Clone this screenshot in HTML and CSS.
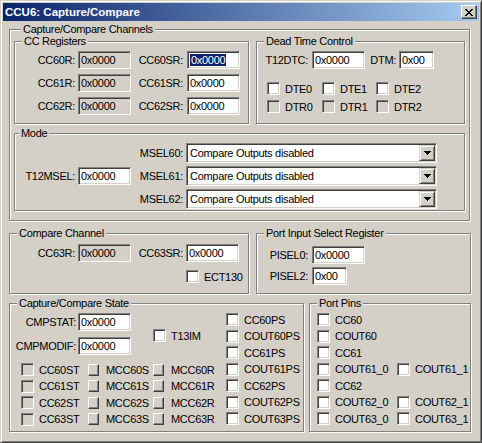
FILE: index.html
```html
<!DOCTYPE html>
<html lang="en">
<head>
    <meta charset="UTF-8">
    <title>CCU6: Capture/Compare</title>
    <link rel="stylesheet" href="styles.css">
</head>
<body>
<div id="window">
    <div id="titlebar">
        <span class="caption">CCU6: Capture/Compare</span>
        <span class="close-btn"><svg width="8" height="7" viewBox="0 0 8 7"><path d="M0 0h2v1H0zM6 0h2v1H6zM1 1h2v1H1zM5 1h2v1H5zM2 2h4v1H2zM3 3h2v1H3zM2 4h4v1H2zM1 5h2v1H1zM5 5h2v1H5zM0 6h2v1H0zM6 6h2v1H6z" fill="#000"/></svg></span>
    </div>
    <div id="client">
        <div class="group channels">
            <div class="legend">Capture/Compare Channels</div>
            <div class="top-row">
                <div class="group cc-regs">
                    <div class="legend">CC Registers</div>
                    <div class="reg-grid">
                        <span class="lbl">CC60R:</span><span class="edit ro">0x0000</span>
                        <span class="lbl lbl2">CC60SR:</span><span class="edit"><span class="sel">0x0000</span></span>
                        <span class="lbl">CC61R:</span><span class="edit ro">0x0000</span>
                        <span class="lbl lbl2">CC61SR:</span><span class="edit">0x0000</span>
                        <span class="lbl">CC62R:</span><span class="edit ro">0x0000</span>
                        <span class="lbl lbl2">CC62SR:</span><span class="edit">0x0000</span>
                    </div>
                </div>
                <div class="group dead-time">
                    <div class="legend">Dead Time Control</div>
                    <div class="dt-row">
                        <span class="lbl lbl2">T12DTC:</span><span class="edit">0x0000</span>
                        <span class="lbl">DTM:</span><span class="edit">0x00</span>
                    </div>
                    <div class="dt-checks">
                        <span class="check"><span class="box"></span>DTE0</span>
                        <span class="check"><span class="box"></span>DTE1</span>
                        <span class="check"><span class="box"></span>DTE2</span>
                        <span class="check"><span class="box dis"></span>DTR0</span>
                        <span class="check"><span class="box dis"></span>DTR1</span>
                        <span class="check"><span class="box dis"></span>DTR2</span>
                    </div>
                </div>
            </div>
            <div class="group mode">
                <div class="legend">Mode</div>
                <div class="mode-body">
                    <div class="mode-left">
                        <span class="lbl">T12MSEL:</span><span class="edit">0x0000</span>
                    </div>
                    <div class="mode-right">
                        <span class="lbl">MSEL60:</span>
                        <span class="combo"><span class="combo-text">Compare Outputs disabled</span><span class="combo-btn"><svg width="7" height="4" viewBox="0 0 7 4"><path d="M0 0h7v1H0zM1 1h5v1H1zM2 2h3v1H2zM3 3h1v1H3z" fill="#000"/></svg></span></span>
                        <span class="lbl">MSEL61:</span>
                        <span class="combo"><span class="combo-text">Compare Outputs disabled</span><span class="combo-btn"><svg width="7" height="4" viewBox="0 0 7 4"><path d="M0 0h7v1H0zM1 1h5v1H1zM2 2h3v1H2zM3 3h1v1H3z" fill="#000"/></svg></span></span>
                        <span class="lbl">MSEL62:</span>
                        <span class="combo"><span class="combo-text">Compare Outputs disabled</span><span class="combo-btn"><svg width="7" height="4" viewBox="0 0 7 4"><path d="M0 0h7v1H0zM1 1h5v1H1zM2 2h3v1H2zM3 3h1v1H3z" fill="#000"/></svg></span></span>
                    </div>
                </div>
            </div>
        </div>

        <div class="mid-row">
            <div class="group compare-ch">
                <div class="legend">Compare Channel</div>
                <div class="cmp-grid">
                    <span class="lbl">CC63R:</span><span class="edit ro">0x0000</span>
                    <span class="lbl">CC63SR:</span><span class="edit">0x0000</span>
                    <span class="check col4"><span class="box"></span>ECT130</span>
                </div>
            </div>
            <div class="group port-input">
                <div class="legend">Port Input Select Register</div>
                <div class="pisel-grid">
                    <span class="lbl lbl2">PISEL0:</span><span class="edit">0x0000</span>
                    <span class="lbl lbl2">PISEL2:</span><span class="edit short">0x00</span>
                </div>
            </div>
        </div>

        <div class="bottom-row">
            <div class="group cc-state">
                <div class="legend">Capture/Compare State</div>
                <div class="state-body">
                    <div class="state-left">
                        <div class="state-top">
                            <span class="lbl">CMPSTAT:</span><span class="edit">0x0000</span>
                            <span class="lbl">CMPMODIF:</span><span class="edit">0x0000</span>
                            <span class="check t13im"><span class="box"></span>T13IM</span>
                        </div>
                        <div class="state-grid">
                            <span class="check"><span class="box dis"></span>CC60ST</span>
                            <span class="check wide"><span class="box raised"></span>MCC60S</span>
                            <span class="check wide"><span class="box raised"></span>MCC60R</span>
                            <span class="check"><span class="box dis"></span>CC61ST</span>
                            <span class="check wide"><span class="box raised"></span>MCC61S</span>
                            <span class="check wide"><span class="box raised"></span>MCC61R</span>
                            <span class="check"><span class="box dis"></span>CC62ST</span>
                            <span class="check wide"><span class="box raised"></span>MCC62S</span>
                            <span class="check wide"><span class="box raised"></span>MCC62R</span>
                            <span class="check"><span class="box dis"></span>CC63ST</span>
                            <span class="check wide"><span class="box raised"></span>MCC63S</span>
                            <span class="check wide"><span class="box raised"></span>MCC63R</span>
                        </div>
                    </div>
                    <div class="state-right">
                        <span class="check"><span class="box"></span>CC60PS</span>
                        <span class="check"><span class="box"></span>COUT60PS</span>
                        <span class="check"><span class="box"></span>CC61PS</span>
                        <span class="check"><span class="box"></span>COUT61PS</span>
                        <span class="check"><span class="box"></span>CC62PS</span>
                        <span class="check"><span class="box"></span>COUT62PS</span>
                        <span class="check"><span class="box"></span>COUT63PS</span>
                    </div>
                </div>
            </div>
            <div class="group port-pins">
                <div class="legend">Port Pins</div>
                <div class="pins-grid">
                    <span class="check full"><span class="box"></span>CC60</span>
                    <span class="check full"><span class="box"></span>COUT60</span>
                    <span class="check full"><span class="box"></span>CC61</span>
                    <span class="check"><span class="box"></span>COUT61_0</span>
                    <span class="check"><span class="box"></span>COUT61_1</span>
                    <span class="check full"><span class="box"></span>CC62</span>
                    <span class="check"><span class="box"></span>COUT62_0</span>
                    <span class="check"><span class="box"></span>COUT62_1</span>
                    <span class="check"><span class="box"></span>COUT63_0</span>
                    <span class="check"><span class="box"></span>COUT63_1</span>
                </div>
            </div>
        </div>
    </div>
</div>
</body>
</html>
```

FILE: styles.css
```css
body {
    margin: 0;
}
#window {
    width: 482px;
    height: 443px;
    box-sizing: border-box;
    padding: 2px;
    background: #d4d0c8;
    border: 1px solid;
    border-color: #d4d0c8 #404040 #404040 #d4d0c8;
    box-shadow: inset 1px 1px #fff, inset -1px -1px #808080;
    font-family: "Liberation Sans", Arial, sans-serif;
    font-size: 11px;
    letter-spacing: -0.3px;
    color: #000;
}
#titlebar {
    height: 18px;
    display: flex;
    align-items: center;
    justify-content: space-between;
    padding: 0 2px;
    background: linear-gradient(to right, #0a246a, #a6caf0);
}
.caption {
    color: #fff;
    font-weight: bold;
    font-size: 11.5px;
    letter-spacing: 0;
}
.close-btn {
    width: 16px;
    height: 14px;
    box-sizing: border-box;
    display: flex;
    align-items: center;
    justify-content: center;
    background: #d4d0c8;
    border: 1px solid;
    border-color: #fff #404040 #404040 #fff;
    box-shadow: inset -1px -1px #808080;
}
#client {
    padding: 8px 0 0 6px;
}

/* group boxes */
.group {
    box-sizing: border-box;
    border: 1px solid #808080;
    box-shadow: inset 1px 1px #fff, 1px 1px #fff;
}
.legend {
    width: fit-content;
    height: 13px;
    line-height: 13px;
    margin: -7px 0 0 7px;
    padding: 0 2px;
    background: #d4d0c8;
    white-space: nowrap;
}

/* controls */
.lbl {
    text-align: right;
    padding-right: 3px;
    white-space: nowrap;
}
.lbl2 {
    padding-right: 4px;
}
.edit {
    box-sizing: border-box;
    height: 18px;
    line-height: 16px;
    padding-left: 2px;
    background: #fff;
    border: 1px solid;
    border-color: #808080 #fff #fff #808080;
    box-shadow: inset 1px 1px #404040, inset -1px -1px #d4d0c8;
    white-space: nowrap;
    overflow: hidden;
}
.edit.ro {
    background: #d4d0c8;
}
.edit.short {
    width: 35px;
}
.sel {
    background: #0a246a;
    color: #fff;
    padding: 0 1px;
}
.check {
    display: flex;
    align-items: center;
    gap: 5px;
    height: 13px;
    white-space: nowrap;
}
.check.wide {
    gap: 7px;
}
.box {
    flex: none;
    width: 13px;
    height: 13px;
    box-sizing: border-box;
    background: #fff;
    border: 1px solid;
    border-color: #808080 #fff #fff #808080;
    box-shadow: inset 1px 1px #404040, inset -1px -1px #d4d0c8;
}
.box.dis {
    background: #d4d0c8;
}
.box.raised {
    width: 11px;
    height: 12px;
    background: #d4d0c8;
    border-color: #fff #404040 #404040 #fff;
    box-shadow: inset -1px -1px #808080;
}
.combo {
    display: flex;
    align-items: center;
    height: 20px;
    box-sizing: border-box;
    padding: 1px;
    background: #fff;
    border: 1px solid;
    border-color: #808080 #fff #fff #808080;
    box-shadow: inset 1px 1px #404040, inset -1px -1px #d4d0c8;
}
.combo-text {
    flex: 1;
    padding-left: 2px;
    white-space: nowrap;
}
.combo-btn {
    width: 16px;
    height: 16px;
    box-sizing: border-box;
    display: flex;
    align-items: center;
    justify-content: center;
    background: #d4d0c8;
    border: 1px solid;
    border-color: #d4d0c8 #404040 #404040 #d4d0c8;
    box-shadow: inset 1px 1px #fff, inset -1px -1px #808080;
}

/* capture/compare channels */
.channels {
    width: 461px;
    padding: 0 4px 9px;
}
.top-row {
    display: flex;
    gap: 7px;
    margin-top: 5px;
}
.cc-regs {
    width: 235px;
    height: 83px;
}
.dead-time {
    width: 209px;
    height: 83px;
}
.reg-grid {
    display: grid;
    grid-template-columns: 63px 53px 56px 53px;
    grid-auto-rows: 18px;
    row-gap: 5px;
    align-items: center;
    margin-top: 3px;
}
.dt-row {
    display: grid;
    grid-template-columns: 55px 53px 34px 35px;
    height: 18px;
    align-items: center;
    margin-top: 3px;
}
.dt-checks {
    display: grid;
    grid-template-columns: 55px 54px auto;
    grid-auto-rows: 13px;
    row-gap: 5px;
    margin-top: 13px;
    padding-left: 10px;
}
.mode {
    height: 78px;
    margin-top: 9px;
}
.mode .legend {
    margin-left: 4px;
}
.mode-body {
    display: flex;
    margin-top: 3px;
}
.mode-left {
    display: flex;
    align-items: center;
}
.mode-left .lbl {
    width: 63px;
    box-sizing: border-box;
}
.mode-left .edit {
    width: 53px;
}
.mode-right {
    display: grid;
    grid-template-columns: 55px 251px;
    grid-auto-rows: 20px;
    row-gap: 3px;
    align-items: center;
}

/* compare channel, port input */
.mid-row {
    display: flex;
    gap: 7px;
    margin-top: 12px;
}
.compare-ch {
    width: 240px;
    height: 61px;
}
.port-input {
    width: 215px;
    height: 61px;
}
.cmp-grid {
    display: grid;
    grid-template-columns: 68px 53px 55px 53px;
    grid-template-rows: 18px 13px;
    row-gap: 8px;
    align-items: center;
    margin-top: 4px;
}
.col4 {
    grid-column: 4;
}
.pisel-grid {
    display: grid;
    grid-template-columns: 55px 53px;
    grid-auto-rows: 18px;
    row-gap: 3px;
    align-items: center;
    margin-top: 6px;
}

/* state, port pins */
.bottom-row {
    display: flex;
    gap: 5px;
    margin-top: 9px;
}
.cc-state {
    width: 295px;
    height: 129px;
}
.port-pins {
    width: 162px;
    height: 129px;
}
.state-body {
    display: flex;
    margin-top: 3px;
}
.state-left {
    width: 216px;
}
.state-top {
    display: grid;
    grid-template-columns: 68px 53px 22px auto;
    grid-template-rows: 18px 18px;
    row-gap: 6px;
    height: 50px;
    align-items: center;
}
.state-top .lbl {
    grid-column: 1;
    padding-right: 2px;
}
.t13im {
    grid-column: 4;
    grid-row: 1 / span 2;
    align-self: start;
    margin-top: 16px;
}
.state-grid {
    display: grid;
    grid-template-columns: 67px 65px auto;
    grid-auto-rows: 13px;
    row-gap: 3.5px;
    padding-left: 11px;
}
.state-right {
    display: grid;
    grid-auto-rows: 13px;
    row-gap: 3.5px;
}
.pins-grid {
    display: grid;
    grid-template-columns: 80px auto;
    grid-auto-rows: 13px;
    row-gap: 3.5px;
    margin-top: 3px;
    padding-left: 7px;
}
.full {
    grid-column: 1 / -1;
}
```
